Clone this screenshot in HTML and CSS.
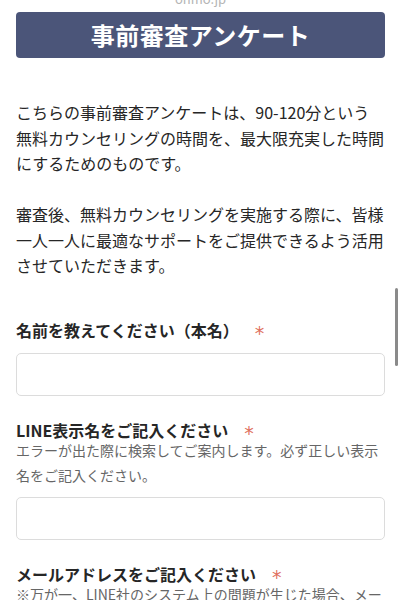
FILE: index.html
```html
<!DOCTYPE html>
<html lang="ja">
<head>
<meta charset="utf-8">
<title>事前審査アンケート</title>
<link rel="stylesheet" href="styles.css">
</head>
<body>
<div class="url"><span class="url-text">ohmo.jp</span></div>
<main class="page">
  <h1 class="title">事前審査アンケート</h1>
  <div class="intro">
    <p>こちらの事前審査アンケートは、90-120分という無料カウンセリングの時間を、最大限充実した時間にするためのものです。</p>
    <p>審査後、無料カウンセリングを実施する際に、皆様一人一人に最適なサポートをご提供できるよう活用させていただきます。</p>
  </div>
  <div class="field">
    <div class="label">名前を教えてください（本名）<span class="req">*</span></div>
    <div class="input"></div>
  </div>
  <div class="field">
    <div class="label">LINE表示名をご記入ください<span class="req">*</span></div>
    <div class="help">エラーが出た際に検索してご案内します。必ず正しい表示名をご記入ください。</div>
    <div class="input"></div>
  </div>
  <div class="field">
    <div class="label">メールアドレスをご記入ください<span class="req">*</span></div>
    <div class="help">※万が一、LINE社のシステム上の問題が生じた場合、メールでご連絡させていただきます。</div>
    <div class="input"></div>
  </div>
</main>
<div class="scrollbar"></div>
</body>
</html>
```
FILE: styles.css
```css
html, body {
  margin: 0;
  padding: 0;
  background: #fff;
}
body {
  font-family: "Noto Sans CJK JP", "Noto Sans", sans-serif;
  color: #262626;
  overflow: hidden;
}
.url {
  height: 12px;
  overflow: hidden;
  text-align: center;
  font-size: 13px;
  line-height: 13px;
  color: #b5b5b5;
}
.url-text {
  display: block;
  margin-top: -8px;
}
.page {
  padding: 0 16px;
}
.title {
  margin: 0;
  height: 46px;
  background: #4b5579;
  border-radius: 4px;
  color: #fff;
  font-size: 24px;
  font-weight: 700;
  letter-spacing: 0.5px;
  line-height: 46px;
  text-align: center;
}
.intro {
  margin-top: 42px;
  font-size: 16px;
  line-height: 25.5px;
}
.intro p {
  margin: 0 0 25.5px 0;
}
.intro p:last-child {
  margin-bottom: 0;
}
.field {
  margin-top: 24px;
}
.intro + .field {
  margin-top: 41px;
}
.label {
  font-size: 16px;
  font-weight: 700;
  line-height: 20px;
  color: #262626;
}
.req {
  margin-left: 16px;
  color: #e0705d;
  font-weight: 400;
  font-size: 19px;
  line-height: 0;
  vertical-align: -3px;
  font-family: "DejaVu Sans", sans-serif;
}
.help {
  font-size: 14px;
  line-height: 25px;
  color: #666;
  margin-top: -2px;
}
.input {
  margin-top: 13px;
  height: 41px;
  border: 1px solid #dcdcdc;
  border-radius: 5px;
  background: #fff;
}
.help + .input {
  margin-top: 9px;
}
.scrollbar {
  position: absolute;
  right: 3px;
  top: 288px;
  width: 3px;
  height: 78px;
  background: #8a8a8a;
  border-radius: 2px;
}
```
